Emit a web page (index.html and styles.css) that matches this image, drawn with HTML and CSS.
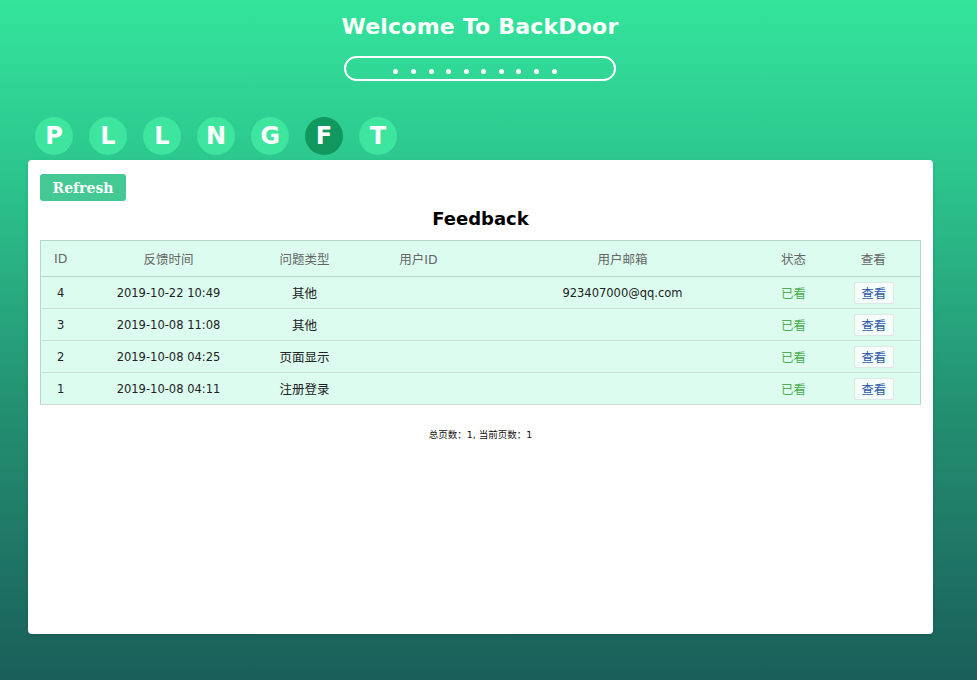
FILE: index.html
```html
<!DOCTYPE html>
<html>
<head>
<meta charset="utf-8">
<link rel="stylesheet" href="styles.css">
</head>
<body>
<div class="page">
<header class="top">
  <h1 class="title">Welcome To BackDoor</h1>
  <div class="pw">
    <span class="dot"></span><span class="dot"></span><span class="dot"></span><span class="dot"></span><span class="dot"></span>
    <span class="dot"></span><span class="dot"></span><span class="dot"></span><span class="dot"></span><span class="dot"></span>
  </div>
</header>
<nav class="tabs">
  <span class="tab">P</span>
  <span class="tab">L</span>
  <span class="tab">L</span>
  <span class="tab">N</span>
  <span class="tab">G</span>
  <span class="tab active">F</span>
  <span class="tab">T</span>
</nav>
<main class="card">
  <button class="refresh">Refresh</button>
  <h2 class="heading">Feedback</h2>
  <table class="grid">
    <colgroup>
      <col class="c1"><col class="c2"><col class="c3"><col class="c4"><col class="c5"><col class="c6"><col class="c7">
    </colgroup>
    <thead>
      <tr><th>ID</th><th>反馈时间</th><th>问题类型</th><th>用户ID</th><th>用户邮箱</th><th>状态</th><th>查看</th></tr>
    </thead>
    <tbody>
      <tr><td>4</td><td>2019-10-22 10:49</td><td>其他</td><td></td><td>923407000@qq.com</td><td class="seen">已看</td><td><span class="view">查看</span></td></tr>
      <tr><td>3</td><td>2019-10-08 11:08</td><td>其他</td><td></td><td></td><td class="seen">已看</td><td><span class="view">查看</span></td></tr>
      <tr><td>2</td><td>2019-10-08 04:25</td><td>页面显示</td><td></td><td></td><td class="seen">已看</td><td><span class="view">查看</span></td></tr>
      <tr><td>1</td><td>2019-10-08 04:11</td><td>注册登录</td><td></td><td></td><td class="seen">已看</td><td><span class="view">查看</span></td></tr>
    </tbody>
  </table>
  <p class="pages">总页数：1, 当前页数：1</p>
</main>
</div>
</body>
</html>
```
FILE: styles.css
```css
html, body {
  margin: 0;
  padding: 0;
}
body {
  width: 977px;
  height: 680px;
  overflow: hidden;
  background: linear-gradient(180deg, #33e49b 0%, #2cc68e 25%, #239071 60%, #1a5f5a 100%);
  font-family: "DejaVu Sans", "Noto Sans CJK SC", sans-serif;
}
.page {
  width: 960px;
}
.top {
  display: flex;
  flex-direction: column;
  align-items: center;
  padding-top: 11px;
}
.title {
  margin: 0;
  color: #fff;
  font-family: "DejaVu Sans", sans-serif;
  font-weight: bold;
  font-size: 22px;
  line-height: 32px;
  letter-spacing: 0.2px;
}
.pw {
  margin-top: 13px;
  width: 268px;
  height: 21px;
  box-sizing: content-box;
  border: 2px solid #fff;
  border-radius: 14px;
  display: flex;
  justify-content: center;
  align-items: center;
  gap: 12.6px;
}
.pw .dot:first-child {
  margin-left: -10px;
}
.dot {
  width: 5px;
  height: 5px;
  border-radius: 50%;
  background: #fff;
  margin-top: 6px;
}
.tabs {
  display: flex;
  gap: 16px;
  margin: 36px 0 0 35px;
  height: 43px;
}
.tab {
  width: 38px;
  height: 38px;
  border-radius: 50%;
  background: #3ee59f;
  color: #fff;
  font-family: "DejaVu Sans", sans-serif;
  font-weight: bold;
  font-size: 24px;
  display: flex;
  align-items: center;
  justify-content: center;
}
.tab.active {
  background: #11985e;
}
.card {
  margin: 0 0 0 28px;
  width: 905px;
  height: 474px;
  box-sizing: border-box;
  background: #fff;
  border-radius: 4px;
  padding: 14px 12px 0 12px;
  box-shadow: 0 2px 4px rgba(0,0,0,0.12);
}
.refresh {
  display: block;
  width: 86px;
  height: 27px;
  border: none;
  border-radius: 3px;
  background: #44c994;
  color: #fff;
  font-family: "DejaVu Serif", serif;
  font-weight: bold;
  font-size: 14px;
  padding: 0;
}
.heading {
  margin: 5px 0 8px 0;
  text-align: center;
  font-family: "DejaVu Sans", sans-serif;
  font-weight: bold;
  font-size: 18px;
  line-height: 26px;
  color: #000;
}
.grid {
  width: 880px;
  table-layout: fixed;
  border-collapse: collapse;
  background: #dbfcef;
  border: 1px solid #b9d4c9;
  font-size: 11.5px;
  color: #222;
}
.c1 { width: 40px; }
.c2 { width: 176px; }
.c3 { width: 96px; }
.c4 { width: 132px; }
.c5 { width: 276px; }
.c6 { width: 66px; }
.c7 { width: 94px; }
.grid th {
  height: 35px;
  font-weight: normal;
  color: #666;
  text-align: center;
  padding: 0;
  border-bottom: 1px solid #b9d4c9;
  font-size: 12.5px;
}
.grid td {
  height: 31px;
  text-align: center;
  padding: 0;
  border-bottom: 1px solid #c8e0d6;
  font-size: 11.5px;
}
.grid td:nth-child(3) {
  font-size: 12.5px;
}
.grid td.seen {
  color: #4cb04c;
  font-size: 12.5px;
}
.view {
  display: inline-block;
  width: 40px;
  height: 22px;
  line-height: 22px;
  box-sizing: border-box;
  border: 1px solid #dce8e3;
  background: #f4fdf9;
  color: #2f5aa8;
  border-radius: 2px;
  margin-left: 1px;
  font-size: 12.5px;
}
.pages {
  margin: 22px 0 0 0;
  text-align: center;
  font-size: 9.5px;
  color: #111;
}
```
